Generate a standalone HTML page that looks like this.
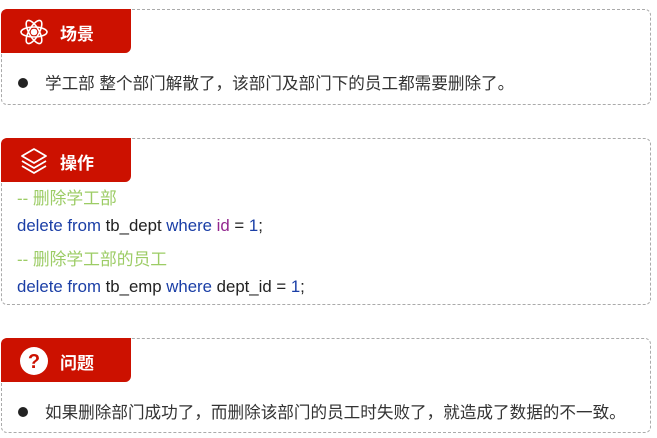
<!DOCTYPE html>
<html><head><meta charset="utf-8"><style>
body{margin:0;width:657px;height:438px;background:#fff;position:relative;overflow:hidden;font-family:"Liberation Sans","Noto Sans CJK SC",sans-serif;}
.box{position:absolute;left:1px;width:650px;border:1px dashed #aaa;border-radius:6px;box-sizing:border-box;}
.tab{position:absolute;left:-1px;top:-1px;width:130px;height:44px;background:#cc1100;border-radius:6px 0 6px 0;color:#fff;font-weight:bold;font-size:17px;}
.tab span{position:absolute;left:59px;top:11px;}
.tab svg{position:absolute;left:18px;top:8px;}
.li{position:absolute;left:16px;font-size:16.6px;color:#333;white-space:nowrap;}
.li:before{content:"";display:inline-block;width:10px;height:10px;border-radius:50%;background:#222;margin-right:17px;vertical-align:1px;}
.code{position:absolute;left:15px;font-size:16.8px;color:#222;white-space:nowrap;}
.k{color:#1a3ea6}.c{color:#9ccc65}.p{color:#93278f}
</style></head><body>
<div class="box" style="top:9px;height:96px;">
 <div class="tab"><svg width="30" height="30" viewBox="0 0 30 30" fill="none" stroke="#fff" stroke-width="1.6"><ellipse cx="15" cy="15" rx="13" ry="5"/><ellipse cx="15" cy="15" rx="13" ry="5" transform="rotate(60 15 15)"/><ellipse cx="15" cy="15" rx="13" ry="5" transform="rotate(120 15 15)"/><circle cx="15" cy="15" r="2.5" fill="#fff"/></svg><span>场景</span></div>
 <div class="li" style="top:60px;">学工部 整个部门解散了，该部门及部门下的员工都需要删除了。</div>
</div>
<div class="box" style="top:138px;height:167px;">
 <div class="tab"><svg width="30" height="30" viewBox="0 0 30 30" fill="none" stroke="#fff" stroke-width="1.8" stroke-linejoin="round"><path d="M15 3L27 10L15 17L3 10Z"/><path d="M3 15L15 22L27 15"/><path d="M3 20L15 27L27 20"/></svg><span>操作</span></div>
 <div class="code c" style="top:46px;">-- 删除学工部</div>
 <div class="code" style="top:77px;"><span class="k">delete from</span> tb_dept <span class="k">where</span> <span class="p">id</span> = <span class="k">1</span>;</div>
 <div class="code c" style="top:107px;">-- 删除学工部的员工</div>
 <div class="code" style="top:138px;"><span class="k">delete from</span> tb_emp <span class="k">where</span> dept_id = <span class="k">1</span>;</div>
</div>
<div class="box" style="top:338px;height:95px;">
 <div class="tab"><svg width="30" height="30" viewBox="0 0 30 30"><circle cx="15" cy="15" r="14" fill="#fff"/><text x="15" y="22" text-anchor="middle" font-family="Liberation Sans" font-weight="bold" font-size="20" fill="#cc1100">?</text></svg><span>问题</span></div>
 <div class="li" style="top:60px;">如果删除部门成功了，而删除该部门的员工时失败了，就造成了数据的不一致。</div>
</div>
</body></html>
